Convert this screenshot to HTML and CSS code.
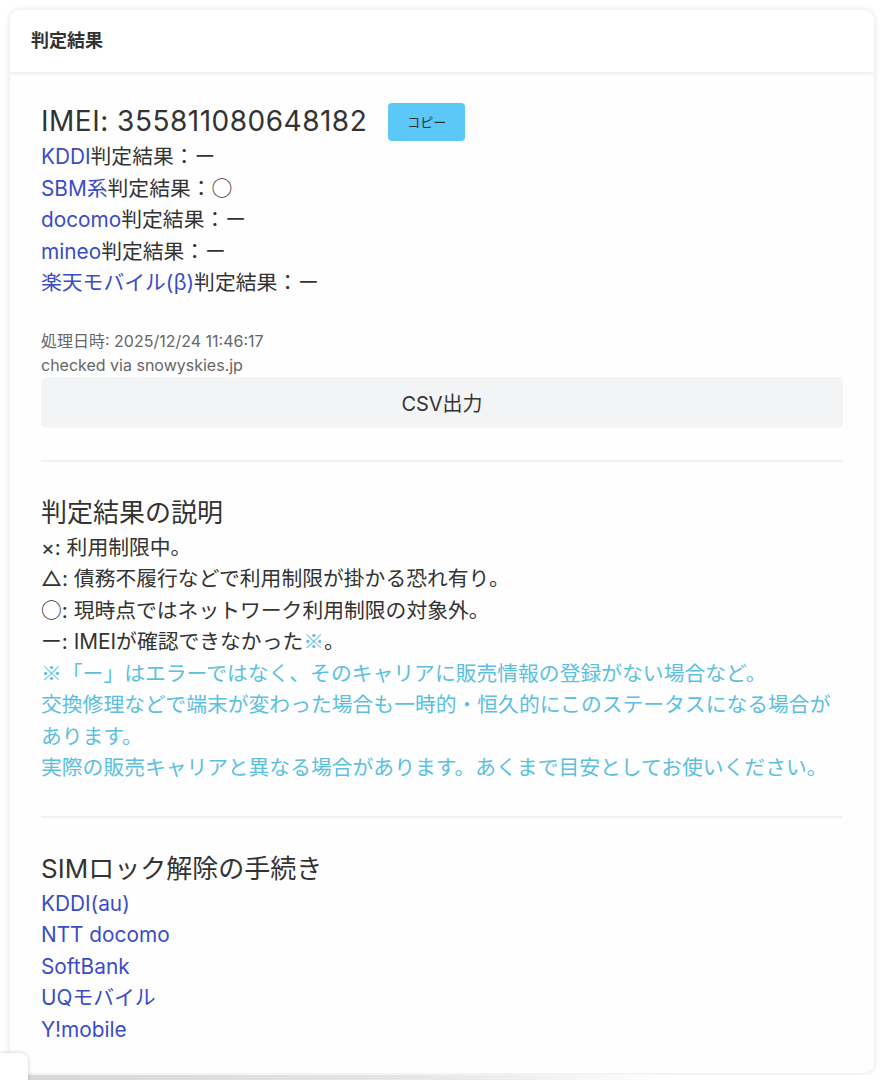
FILE: index.html
```html
<!doctype html>
<html>
<head>
  <meta charset="utf-8"/>
  <title>判定結果</title>
  <link rel="stylesheet" href="styles.css">
</head>
<body>
  <div class="Card">
    <div class="Card__Header">判定結果</div>
    <div class="Card__Body">
      <div class="Result">
        <div class="Result__Imei">
          <span>IMEI: 355811080648182</span>
          <button class="Result__Copy">コピー</button>
        </div>
        <div class="Result__Row"><a href="#">KDDI</a>判定結果：ー</div>
        <div class="Result__Row"><a href="#">SBM系</a>判定結果：<span class="Cjk">○</span></div>
        <div class="Result__Row"><a href="#">docomo</a>判定結果：ー</div>
        <div class="Result__Row"><a href="#">mineo</a>判定結果：ー</div>
        <div class="Result__Row"><a href="#">楽天モバイル(<span class="Cjk">β</span>)</a>判定結果：ー</div>
        <div class="Result__Meta">
          <div>処理日時: 2025/12/24 11:46:17</div>
          <div>checked via snowyskies.jp</div>
        </div>
        <button class="Result__Csv">CSV出力</button>
      </div>

      <hr class="Divider">

      <div class="Section">
        <h2 class="Section__Title">判定結果の説明</h2>
        <div>×: 利用制限中。</div>
        <div>△: 債務不履行などで利用制限が掛かる恐れ有り。</div>
        <div><span class="Cjk">○</span>: 現時点ではネットワーク利用制限の対象外。</div>
        <div>ー: IMEIが確認できなかった<span class="Note Cjk">※</span>。</div>
        <div class="Note"><span class="Cjk">※</span>「ー」はエラーではなく、そのキャリアに販売情報の登録がない場合など。</div>
        <div class="Note">交換修理などで端末が変わった場合も一時的・恒久的にこのステータスになる場合があります。</div>
        <div class="Note">実際の販売キャリアと異なる場合があります。あくまで目安としてお使いください。</div>
      </div>

      <hr class="Divider">

      <div class="Section">
        <h2 class="Section__Title">SIMロック解除の手続き</h2>
        <div><a href="#">KDDI(au)</a></div>
        <div><a href="#">NTT docomo</a></div>
        <div><a href="#">SoftBank</a></div>
        <div><a href="#">UQモバイル</a></div>
        <div><a href="#">Y!mobile</a></div>
      </div>
    </div>
  </div>
  <div class="NextCard"></div>
  <div class="Corner"></div>
</body>
</html>
```

FILE: styles.css
```css
body {
  background-color: #fff;
  color: #333;
  font-family: Inter, "Noto Sans CJK JP", sans-serif;
  margin: 0;
  padding: 10px 12px 0 10px;
}

a {
  color: #3a4cc6;
  text-decoration: none;
}

.Cjk {
  font-family: "Noto Sans CJK JP", sans-serif;
  line-height: 1;
}

.Card {
  background-color: #fff;
  border-radius: 10px;
  box-shadow: 0 0 6px rgba(0, 0, 0, .13);
  overflow: hidden;
}
.Card__Header {
  box-shadow: 0 2px 4px rgba(0, 0, 0, .08);
  font-size: 18px;
  font-weight: 600;
  height: 62px;
  line-height: 62px;
  padding: 0 21px;
  position: relative;
}
.Card__Body {
  background-color: #fefefe;
  font-size: 20.8px;
  line-height: 31.5px;
  padding: 30px 31px 28px;
}

.Result__Imei {
  align-items: center;
  display: flex;
  font-size: 28px;
  gap: 21px;
  height: 39px;
  letter-spacing: .5px;
}
.Result__Copy {
  background-color: #5bc8f7;
  border: 0;
  border-radius: 4px;
  color: #333;
  font-family: inherit;
  font-size: 13px;
  height: 38px;
  letter-spacing: 0;
  padding: 0;
  width: 77px;
}
.Result__Meta {
  color: #666;
  font-size: 16px;
  line-height: 24px;
  margin-top: 30px;
}
.Result__Csv {
  background-color: #f3f4f6;
  border: 0;
  border-radius: 6px;
  color: #333;
  display: block;
  font-family: inherit;
  font-size: 20px;
  height: 51px;
  width: 100%;
}

.Divider {
  border: 0;
  border-top: 2px solid #f1f1f1;
  margin: 32px 0 31px;
}

.Section__Title {
  font-size: 26px;
  font-weight: normal;
  line-height: 39px;
  margin: 0;
}

.Note {
  color: #5bc0de;
}

.NextCard {
  background: linear-gradient(to right, #d6d6d6, #e8e8e8 50%, #fff 75%);
  height: 8px;
  margin: 2px -12px 0 7px;
}
.Corner {
  background-color: #fff;
  border-top-right-radius: 8px;
  bottom: 0;
  box-shadow: 0 0 4px rgba(0, 0, 0, .2);
  height: 27px;
  left: 0;
  position: fixed;
  width: 28px;
}
```
